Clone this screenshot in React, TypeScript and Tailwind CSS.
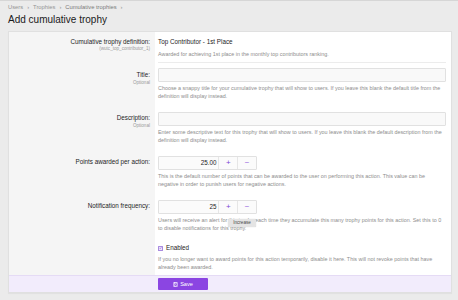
import React from "react";

const Label = ({ title, sub }: { title: string; sub?: string }) => (
  <div className="w-[146px] shrink-0 bg-[#f5f5f5] pr-[5px] text-right">
    <div className="pt-[8px] text-[6.3px] leading-[8px] text-[#1d1d1d]">{title}</div>
    {sub && <div className="mt-[1px] text-[4.6px] leading-[6px] text-[#9b9b9b]">{sub}</div>}
  </div>
);

const Help = ({ children }: { children: React.ReactNode }) => (
  <div className="mt-[2px] text-[5.4px] leading-[8px] text-[#8d8d8d]">{children}</div>
);

const TextInput = () => (
  <div className="h-[14px] w-full rounded-[1px] border border-[#e1e1e1] bg-[#f9f9f9]" />
);

const NumberInput = ({ value, tooltip }: { value: string; tooltip?: boolean }) => (
  <div className="relative flex h-[14px] w-[99px] rounded-[1px] border border-[#e1e1e1] bg-[#fbfbfb]">
    <div className="flex w-[60px] items-center justify-end pr-[2px] text-[6.3px] text-[#1d1d1d]">{value}</div>
    <div className="flex w-[19px] items-center justify-center border-l border-[#e6e6e6] text-[8px] leading-none text-[#7e3fd6]">+</div>
    <div className="flex w-[19px] items-center justify-center border-l border-[#e6e6e6] text-[8px] leading-none text-[#9a6be0]">−</div>
    {tooltip && (
      <div className="absolute left-[69px] top-[18px] flex h-[8px] w-[28px] items-center justify-center rounded-[1px] bg-[#e4e4e4] text-[4.6px] text-[#4a4a4a] shadow-[0_0_1px_rgba(0,0,0,0.25)]">
        Increase
      </div>
    )}
  </div>
);

export default function App() {
  return (
    <div className="min-h-[300px] border-t border-[#d6d6d6] bg-[#ebebeb] font-['Liberation_Sans',Arial,sans-serif]">
      <div className="pl-2 pr-[6px] pt-[2px]">
        <div className="flex items-center gap-[4px] text-[5.8px] leading-[8px] text-[#949494]">
          <span>Users</span>
          <span>›</span>
          <span>Trophies</span>
          <span>›</span>
          <span className="text-[#7a7a7a]">Cumulative trophies</span>
          <span>›</span>
        </div>
        <h1 className="mt-[3px] text-[10px] leading-[12px] text-[#1a1a1a]">Add cumulative trophy</h1>
        <div className="mt-[5px] border border-[#e0e0e0] bg-white shadow-[0_1px_1px_rgba(0,0,0,0.04)]">
          {/* Definition row */}
          <div className="flex">
            <div className="w-[146px] shrink-0 bg-[#f5f5f5] pr-[5px] text-right">
              <div className="pt-[6px] text-[6.3px] leading-[8px] text-[#1d1d1d]">Cumulative trophy definition:</div>
              <div className="mt-[0px] text-[4.6px] leading-[6px] text-[#9b9b9b]">(wutc_top_contributor_1)</div>
            </div>
            <div className="flex-1 pl-[3px] pr-[5px]">
              <div className="border-b border-[#ececec] pb-[4px] pt-[6px]">
                <div className="text-[6.3px] leading-[8px] text-[#1d1d1d]">Top Contributor - 1st Place</div>
                <div className="mt-[4px] text-[5.4px] leading-[8px] text-[#8d8d8d]">
                  Awarded for achieving 1st place in the monthly top contributors ranking.
                </div>
              </div>
            </div>
          </div>

          {/* Title */}
          <div className="flex">
            <Label title="Title:" sub="Optional" />
            <div className="flex-1 pb-[6px] pl-[3px] pr-[5px] pt-[5px]">
              <TextInput />
              <Help>
                Choose a snappy title for your cumulative trophy that will show to users. If you leave this blank the default title from the definition will display instead.
              </Help>
            </div>
          </div>

          {/* Description */}
          <div className="flex">
            <Label title="Description:" sub="Optional" />
            <div className="flex-1 pb-[6px] pl-[3px] pr-[5px] pt-[6px]">
              <TextInput />
              <Help>
                Enter some descriptive text for this trophy that will show to users. If you leave this blank the default description from the definition will display instead.
              </Help>
            </div>
          </div>

          {/* Points */}
          <div className="flex">
            <Label title="Points awarded per action:" />
            <div className="flex-1 pb-[6px] pl-[3px] pr-[5px] pt-[6px]">
              <NumberInput value="25.00" />
              <Help>
                This is the default number of points that can be awarded to the user on performing this action. This value can be negative in order to punish users for negative actions.
              </Help>
            </div>
          </div>

          {/* Notification */}
          <div className="flex">
            <Label title="Notification frequency:" />
            <div className="flex-1 pb-[6px] pl-[3px] pr-[5px] pt-[6px]">
              <NumberInput value="25" tooltip />
              <Help>
                Users will receive an alert for this trophy each time they accumulate this many trophy points for this action. Set this to 0 to disable notifications for this trophy.
              </Help>
            </div>
          </div>

          {/* Enabled */}
          <div className="flex">
            <div className="w-[146px] shrink-0 bg-[#f5f5f5]" />
            <div className="flex-1 pb-[4px] pl-[3px] pr-[5px] pt-[6px]">
              <div className="flex h-[8px] items-center gap-[3px]">
                <div className="flex h-[5px] w-[5px] items-center justify-center rounded-[0.5px] border border-[#a98be0] bg-[#ece4fa]">
                  <svg viewBox="0 0 10 10" className="h-[4px] w-[4px]">
                    <path d="M2 5.2 L4.2 7.4 L8 2.8" fill="none" stroke="#7e3fd6" strokeWidth="1.6" />
                  </svg>
                </div>
                <span className="text-[6.3px] leading-[8px] text-[#1d1d1d]">Enabled</span>
              </div>
              <div className="mt-[4px] text-[5.4px] leading-[7.5px] text-[#8d8d8d]">
                If you no longer want to award points for this action temporarily, disable it here. This will not revoke points that have already been awarded.
              </div>
            </div>
          </div>

          {/* Footer */}
          <div className="flex h-[17px] items-center border-t border-[#e5dbf5] bg-[#f2ecfc] pl-[149px]">
            <div className="flex h-[12px] w-[50px] items-center justify-center gap-[2px] rounded-[1px] bg-[#8b45e2] text-[5.6px] text-white">
              <svg viewBox="0 0 12 12" className="h-[5px] w-[5px]">
                <rect x="1" y="1" width="10" height="10" rx="1.5" fill="none" stroke="white" strokeWidth="1.3" />
                <rect x="3.5" y="1" width="5" height="3.5" fill="none" stroke="white" strokeWidth="1.1" />
                <rect x="3.5" y="7" width="5" height="4" fill="none" stroke="white" strokeWidth="1.1" />
              </svg>
              <span>Save</span>
            </div>
          </div>
        </div>
      </div>
    </div>
  );
}
